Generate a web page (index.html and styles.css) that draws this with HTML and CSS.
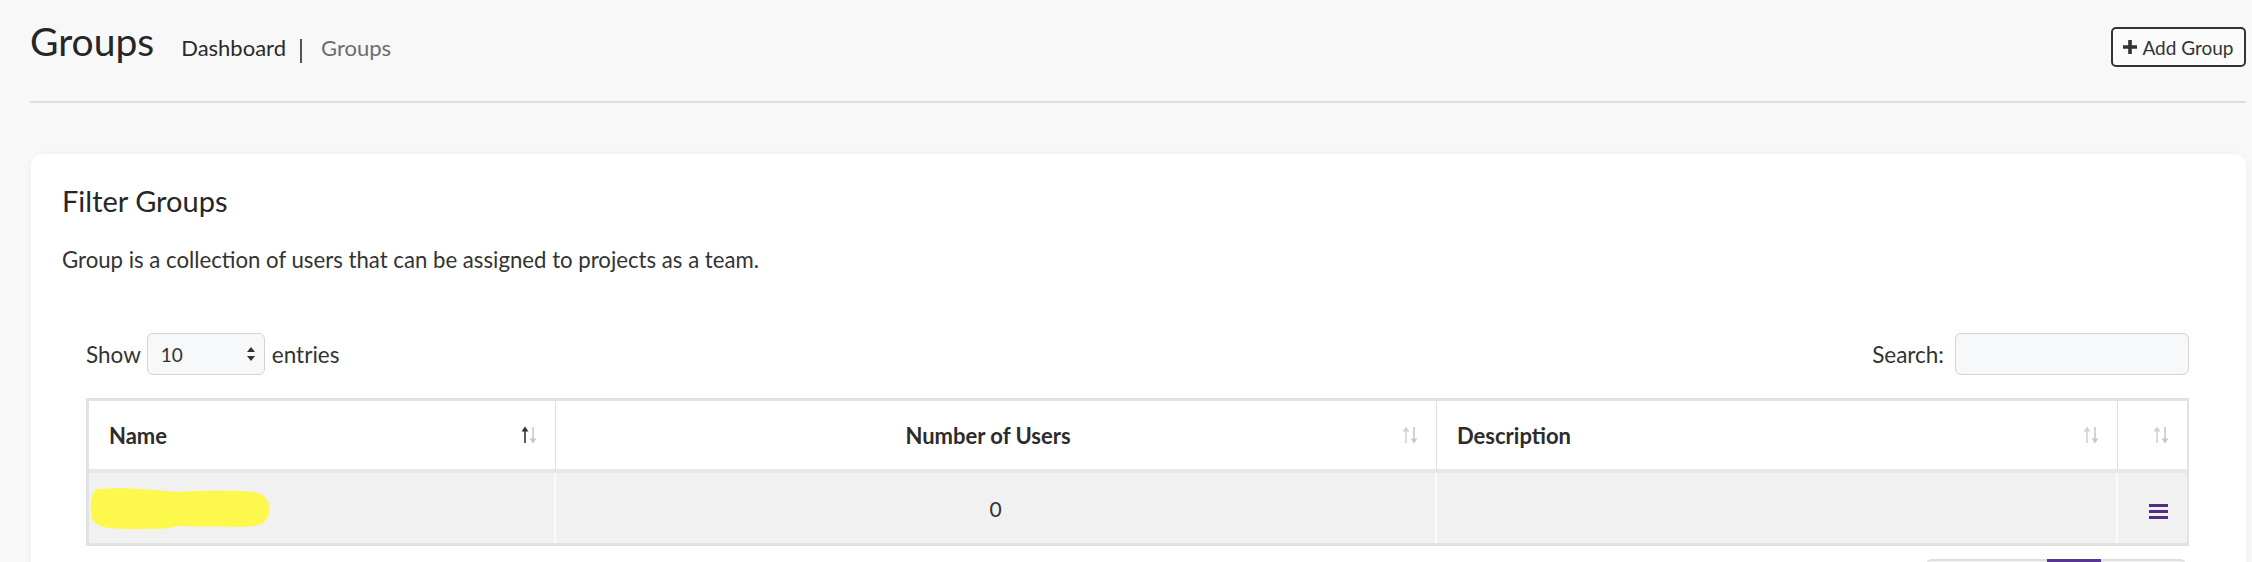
FILE: index.html
```html
<!DOCTYPE html>
<html lang="en">
<head>
<meta charset="utf-8">
<title>Groups</title>
<link rel="stylesheet" href="styles.css">
</head>
<body>
<div class="page">
  <header class="page-header">
    <div class="title-wrap">
      <h1 class="title">Groups</h1>
      <nav class="crumbs">
        <a class="crumb" href="#">Dashboard</a>
        <span class="crumb crumb-active">Groups</span>
      </nav>
    </div>
    <button class="btn-add" type="button">
      <svg class="plus" viewBox="0 0 14 14" width="14" height="14"><path d="M5.2 0h3.6v5.2H14v3.6H8.8V14H5.2V8.8H0V5.2h5.2z" fill="#333"/></svg>
      <span>Add Group</span>
    </button>
  </header>

  <section class="card">
    <h2 class="card-title">Filter Groups</h2>
    <p class="card-desc">Group is a collection of users that can be assigned to projects as a team.</p>

    <div class="dt-wrapper">
      <div class="dt-top">
        <label class="dt-length">Show
          <span class="select"><span class="select-val">10</span>
            <svg class="select-arrows" viewBox="0 0 8 14" width="8" height="14"><path d="M4 0L8 5H0z M4 14L0 9h8z" fill="#333"/></svg>
          </span>
          entries</label>
        <label class="dt-search">Search: <input class="search-input" type="text"></label>
      </div>

      <table class="dt-table">
        <colgroup>
          <col class="col-name">
          <col class="col-num">
          <col class="col-desc">
          <col class="col-act">
        </colgroup>
        <thead>
          <tr>
            <th><div class="th-inner"><span class="th-label">Name</span>
              <svg class="sort" viewBox="0 0 20 18" width="20" height="18"><path d="M6 17V4" stroke="#333" stroke-width="1.6"/><path d="M6 0.5L9.5 5.5H2.5z" fill="#333"/><path d="M14 1v13" stroke="#c8c8c8" stroke-width="1.6"/><path d="M14 17.5L10.5 12.5h7z" fill="#c8c8c8"/></svg></div></th>
            <th><div class="th-inner"><span class="th-label th-center">Number of Users</span>
              <svg class="sort" viewBox="0 0 20 18" width="20" height="18"><path d="M6 17V4" stroke="#d2d2d2" stroke-width="1.6"/><path d="M6 0.5L9.5 5.5H2.5z" fill="#d2d2d2"/><path d="M14 1v13" stroke="#c8c8c8" stroke-width="1.6"/><path d="M14 17.5L10.5 12.5h7z" fill="#c8c8c8"/></svg></div></th>
            <th><div class="th-inner"><span class="th-label">Description</span>
              <svg class="sort" viewBox="0 0 20 18" width="20" height="18"><path d="M6 17V4" stroke="#d2d2d2" stroke-width="1.6"/><path d="M6 0.5L9.5 5.5H2.5z" fill="#d2d2d2"/><path d="M14 1v13" stroke="#c8c8c8" stroke-width="1.6"/><path d="M14 17.5L10.5 12.5h7z" fill="#c8c8c8"/></svg></div></th>
            <th><div class="th-inner"><span class="th-label"></span>
              <svg class="sort" viewBox="0 0 20 18" width="20" height="18"><path d="M6 17V4" stroke="#d2d2d2" stroke-width="1.6"/><path d="M6 0.5L9.5 5.5H2.5z" fill="#d2d2d2"/><path d="M14 1v13" stroke="#c8c8c8" stroke-width="1.6"/><path d="M14 17.5L10.5 12.5h7z" fill="#c8c8c8"/></svg></div></th>
          </tr>
        </thead>
        <tbody>
          <tr>
            <td class="td-name"><svg class="redact" viewBox="0 0 180 42" width="180" height="42"><path d="M9 2C30 0 60 2 85 5C110 4 140 3 162 5C177 6 180 15 179 25C178 37 167 40 150 40C125 39 105 40 88 39C80 42 65 42 45 42C25 42 5 42 2 31C-1 18 1 3 9 2z" fill="#fdf84c"/></svg></td>
            <td class="td-center">0</td>
            <td></td>
            <td class="td-act"><svg class="menu" viewBox="0 0 19 15" width="19" height="15"><rect y="0" width="19" height="3" fill="#4f2d8a"/><rect y="6" width="19" height="3" fill="#4f2d8a"/><rect y="12" width="19" height="3" fill="#4f2d8a"/></svg></td>
          </tr>
        </tbody>
      </table>

      <div class="dt-bottom">
        <ul class="pagination">
          <li class="page-item">Previous</li>
          <li class="page-item active">1</li>
          <li class="page-item">Next</li>
        </ul>
      </div>
    </div>
  </section>
</div>
</body>
</html>
```

FILE: styles.css
```css
* { box-sizing: border-box; }
html, body { margin: 0; padding: 0; }
body {
  background: #f8f8f8;
  font-family: Lato, "Open Sans", sans-serif;
  color: #333;
  overflow: hidden;
}
.page {
  padding: 0 6px 0 30px;
}
.page-header {
  display: flex;
  justify-content: space-between;
  align-items: flex-start;
  padding: 18px 0 34px;
  border-bottom: 2px solid #dedede;
}
.title-wrap {
  display: flex;
  align-items: baseline;
}
.title {
  margin: 0;
  font-size: 39px;
  line-height: 47px;
  font-weight: 400;
  color: #262626;
}
.crumbs {
  display: flex;
  align-items: baseline;
  margin-left: 27px;
}
.crumb {
  font-size: 22px;
  color: #2a2a2a;
  text-decoration: none;
}
.crumb-active {
  color: #6c6c72;
  margin-left: 14px;
  padding-left: 21px;
  position: relative;
}
.crumb-active::before {
  content: "";
  position: absolute;
  left: 0;
  top: 5px;
  height: 24px;
  border-left: 2px solid #555;
}
.btn-add {
  margin-top: 9px;
  height: 40px;
  width: 135px;
  display: flex;
  align-items: center;
  justify-content: center;
  gap: 5px;
  background: #fbfbfb;
  border: 2px solid #333;
  border-radius: 5px;
  font-family: Lato, sans-serif;
  font-size: 19px;
  color: #333;
  padding: 0;
}
.card {
  margin: 51px 0 0 1px;
  background: #fff;
  border-radius: 12px;
  box-shadow: 0 0 8px rgba(0,0,0,0.035);
  padding: 29px 31px 40px 31px;
}
.card-title {
  margin: 0;
  font-size: 29px;
  line-height: 36px;
  font-weight: 400;
  color: #262626;
}
.card-desc {
  margin: 27px 0 0;
  font-size: 22.2px;
  line-height: 28px;
  color: #333;
}
.dt-wrapper {
  padding: 0 26px 0 24px;
  margin-top: 59px;
}
.dt-top {
  display: flex;
  justify-content: space-between;
  align-items: center;
  height: 42px;
}
.dt-length, .dt-search {
  display: flex;
  align-items: center;
  font-size: 22.5px;
  color: #333;
}
.select {
  display: flex;
  align-items: center;
  justify-content: space-between;
  width: 118px;
  height: 42px;
  margin: 0 7px 0 6px;
  padding: 0 9px 0 13px;
  border: 1px solid #d3d3d3;
  border-radius: 6px;
  background: #f7f8fa;
  font-size: 19px;
}
.search-input {
  width: 234px;
  height: 42px;
  margin-left: 11px;
  border: 1px solid #d3d3d3;
  border-radius: 6px;
  background: #f7f8fa;
}
.dt-table {
  width: 100%;
  margin-top: 23px;
  border-collapse: separate;
  border-spacing: 0;
  table-layout: fixed;
  border: 3px solid #e2e2e2;
  border-right-width: 2px;
}
.col-name { width: 467px; }
.col-num { width: 881px; }
.col-desc { width: 681px; }
.col-act { width: 69px; }
.dt-table th {
  height: 72px;
  padding: 0 16px 0 20px;
  background: #fff;
  border-right: 1px solid #e0e0e0;
  border-bottom: 4px solid #e8e8e8;
  font-weight: 700;
  font-size: 22px;
  color: #2c2c2c;
  text-align: left;
}
.dt-table th:last-child, .dt-table td:last-child { border-right: none; }
.th-inner {
  display: flex;
  align-items: center;
}
.th-label { flex: 1; }
.th-center { text-align: center; }
.sort { flex: none; }
.dt-table td {
  height: 70px;
  background: #f1f1f1;
  border-right: 2px solid #fbfbfb;
  font-size: 21px;
  color: #333;
  padding: 0 16px;
}
.dt-table td.td-name { padding: 0 0 0 1px; }
.redact { display: block; }
.td-center { text-align: center; }
.td-act { text-align: right; padding-right: 19px !important; }
.menu { vertical-align: middle; }
.dt-bottom {
  display: flex;
  justify-content: flex-end;
  margin-top: 13px;
}
.pagination {
  display: flex;
  list-style: none;
  margin: 0 3px 0 0;
  padding: 0;
}
.page-item {
  height: 44px;
  padding: 14px 16px 0;
  border: 1px solid #dedede;
  border-top-width: 2px;
  font-size: 19px;
  line-height: 24px;
  color: #555;
  background: #f3f3f3;
}
.page-item:first-child { width: 121px; border-radius: 6px 0 0 6px; }
.page-item.active { width: 54px; background: #5a3492; border-color: #5a3492; color: #fff; }
.page-item:last-child { width: 85px; border-radius: 0 6px 6px 0; }
```
